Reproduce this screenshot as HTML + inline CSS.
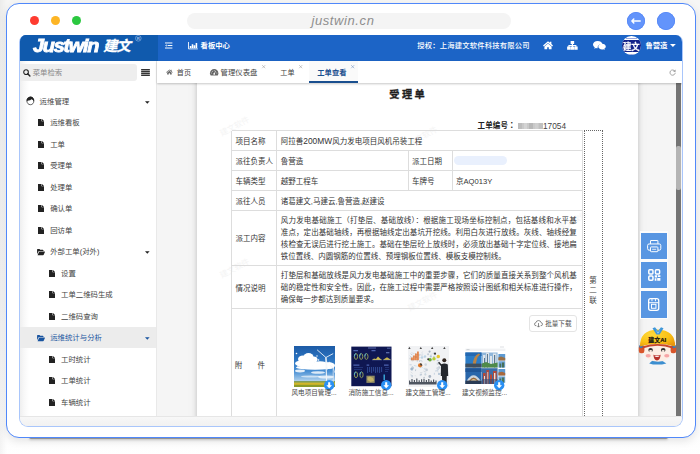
<!DOCTYPE html>
<html lang="zh-CN">
<head>
<meta charset="utf-8">
<title>justwin.cn</title>
<style>
*{box-sizing:border-box;margin:0;padding:0}
html,body{width:700px;height:454px;overflow:hidden;background:#fff}
body{position:relative;font-family:"Liberation Sans","Noto Sans CJK SC",sans-serif;color:#3a3a3a;font-size:7.4px;line-height:1}
svg{position:absolute;display:block;overflow:visible}
#bgsh{position:absolute;left:0;top:0;width:700px;height:454px;background:linear-gradient(90deg,rgba(0,0,0,.045) 0,rgba(0,0,0,0) 7px),linear-gradient(180deg,#f6f6f5 0,#f8f8f8 300px,#fdfdfd 440px,#fff 454px)}
#frame{position:absolute;left:5.6px;top:3px;width:690.6px;height:434.6px;border:1.7px solid #5088fa;border-radius:13px;background:#fff;box-shadow:0 3px 9px rgba(0,0,0,.10)}
#fsh{position:absolute;left:29px;top:436.6px;width:639px;height:2.5px;border-radius:0 0 3px 3px;background:#9c9c9c;box-shadow:0 1px 2.5px rgba(0,0,0,.22)}
.dot{position:absolute;top:16px;width:9px;height:9px;border-radius:50%}
#url{position:absolute;left:187px;top:12.6px;width:324px;height:16px;border-radius:8px;background:#f4f4f4;text-align:left;padding-left:124.4px;font-style:italic;font-size:13px;line-height:15.2px;color:#8e8e8e;letter-spacing:.6px}
.cb{position:absolute;top:11.5px;width:18px;height:18px;border-radius:50%;background:#6394fb;box-shadow:inset 0 0 0 .8px #5688f6}
#app{position:absolute;left:19px;top:34.7px;width:664px;height:392px;border:1px solid #a9c6fb;border-top:none;border-radius:7px 7px 9px 9px;overflow:hidden;background:#f1f1f1}
#hdr{position:absolute;left:0;top:0;width:664px;height:26px;background:#1c64c6;color:#fff}
#logo{position:absolute;left:0;top:0;width:138px;height:26px;background:#105aad}
#side{position:absolute;left:0;top:26px;width:137px;height:356px;background:linear-gradient(90deg,#efefef 0,#f8f8f8 4px,#fff 9px);border-right:1px solid #e9e9e9}
#tabs{position:absolute;left:137px;top:26px;width:527px;height:22.3px;background:#fff;box-shadow:0 1px 2px rgba(0,0,0,.22);z-index:3}
#content{position:absolute;left:137px;top:48px;width:527px;height:334px;background:#f5f5f5;overflow:hidden}
#paper{position:absolute;left:39.6px;top:-10px;width:441px;height:360px;background:#fff;box-shadow:0 0 5px rgba(0,0,0,.20),0 0 12px rgba(0,0,0,.05)}
#foot{position:absolute;left:0;top:381.5px;width:664px;height:11px;background:linear-gradient(180deg,#f7f7f7,#f1f1f1);border-top:1px solid #e6e6e6;z-index:4}
.t{position:absolute;white-space:nowrap;height:12px;line-height:12px}
.b{font-weight:bold}
.mi{position:absolute;left:0;width:136px;height:21.5px}
.mi .t{top:5.25px}
.hl{position:absolute;background:#ddd}
.vl{position:absolute;background:#ddd;width:1px}
.cell{position:absolute;white-space:nowrap;line-height:12px;font-size:7.5px;color:#333}
.jl{display:block;width:296px;text-align:justify;text-align-last:justify;height:12px}
.jn{display:block;height:12px}
.tbtn{position:absolute;left:484px;width:26.4px;height:26.4px;background:#5896e2}
.cap{position:absolute;font-size:6.6px;color:#4a4a4a;white-space:nowrap;line-height:10px;height:10px}
.thumb{position:absolute;top:262.9px;width:41px;height:41px;overflow:hidden}
.wm{position:absolute;color:#f4f4f4;font-size:8px;transform:rotate(-28deg);white-space:nowrap}
</style>
</head>
<body>
<div id="bgsh"></div>
<div id="fsh"></div>
<div id="frame"></div>
<div class="dot" style="left:30px;background:#fe3b30"></div>
<div class="dot" style="left:50.5px;background:#fdb525"></div>
<div class="dot" style="left:71.5px;background:#2bc840"></div>
<div id="url">justwin.cn</div>
<div class="cb" style="left:627px"><svg style="left:4px;top:6px" width="10" height="6" viewBox="0 0 10 6"><path d="M2.8 1 L0.9 3 L2.8 5 M1 3 H9.2" stroke="#fff" stroke-width="1.5" fill="none" stroke-linecap="round" stroke-linejoin="round"/></svg></div>
<div class="cb" style="left:657px"></div>
<div id="app">
<div id="hdr">
<div id="logo">
 <div class="t b" style="left:13.4px;top:0.2px;height:22px;line-height:22px;font-size:18px;font-style:italic;letter-spacing:-1.15px;-webkit-text-stroke:.8px #fff;transform:scaleX(1.105);transform-origin:0 50%">Justwin</div>
 <div class="t b" style="left:83.2px;top:0.6px;height:22px;line-height:22px;font-size:14.2px;font-style:italic;letter-spacing:-.8px;-webkit-text-stroke:.3px #fff">建文</div>
 <svg style="left:114.6px;top:0.5px" width="6.6" height="6.6" viewBox="0 0 20 20"><circle cx="10" cy="10" r="8.6" fill="none" stroke="#9dbfea" stroke-width="1.8"/><text x="10" y="14.6" text-anchor="middle" font-family="Liberation Sans, sans-serif" font-weight="bold" font-size="13" fill="#9dbfea">R</text></svg>
</div>
<svg style="left:145.4px;top:7.4px" width="7.4" height="7" viewBox="0 0 17 14"><path d="M0 1.2H17M6 7H17M0 12.8H17" stroke="#fff" stroke-width="2.2"/><path d="M3.8 4.2L0.6 7L3.8 9.8Z" fill="#fff"/></svg>
<svg style="left:167.9px;top:7.4px" width="9.8" height="7.4" viewBox="0 0 20 15"><path d="M1 0V14H20" stroke="#fff" stroke-width="1.8" fill="none"/><path d="M3.6 12V8H6.8V12Z M7.6 12V4.5H10.8V12Z M11.6 12V6.5H14.8V12Z M15.6 12V2H18.8V12Z" fill="#fff"/></svg>
<div class="t b" style="left:180.6px;top:5.2px;font-size:7.3px">看板中心</div>
<div class="t" style="left:397.3px;top:5.5px;font-size:7.3px;letter-spacing:.2px;font-weight:500">授权：上海建文软件科技有限公司</div>
<svg style="left:522.6px;top:6.6px" width="10" height="8.6" viewBox="0 0 21 17"><path d="M10.5 0L0 8.8L1.8 11L10.5 3.8L19.2 11L21 8.8L17.6 5.9V1.2H14.4V3.3Z" fill="#fff"/><path d="M10.5 4.6L3 10.8V17H8.8V12.4H12.2V17H18V10.8Z" fill="#fff"/></svg>
<svg style="left:546.6px;top:6.2px" width="10.8" height="8.8" viewBox="0 0 22 18"><path d="M7.4 0H14.6V6H12.2V8.2H19.2V11.4H21.8V18H14.8V11.4H17V10.2H12.2V11.4H14.4V18H7.6V11.4H9.8V10.2H5V11.4H7.2V18H0.2V11.4H2.8V8.2H9.8V6H7.4Z" fill="#fff"/></svg>
<svg style="left:572.8px;top:6.2px" width="12.8" height="9" viewBox="0 0 26 18"><path d="M9.5 0C4.2 0 0 3.2 0 7.2C0 9.5 1.4 11.5 3.5 12.8L2.6 15.6L6 13.9C7.1 14.2 8.3 14.4 9.5 14.4C9.4 13.9 9.3 13.4 9.3 12.9C9.3 8.9 13.1 5.7 17.8 5.7C18.2 5.7 18.6 5.7 19 5.8C18.2 2.5 14.3 0 9.5 0Z" fill="#fff"/><path d="M26 12.8C26 9.5 22.6 6.9 18.4 6.9C14.2 6.9 10.8 9.5 10.8 12.8C10.8 16.1 14.2 18.7 18.4 18.7C19.3 18.7 20.2 18.6 21 18.3L23.8 19.7L23 17.4C24.8 16.3 26 14.7 26 12.8Z" fill="#fff" transform="translate(0,-1.7)"/></svg>
<div style="position:absolute;left:601.8px;top:1.3px;width:19px;height:19.4px;border-radius:50%;background:#fff;overflow:hidden">
 <div style="position:absolute;left:0;top:3.8px;width:19px;height:12.4px;background:#14238a"></div>
 <div style="position:absolute;left:4px;top:2.4px;width:11px;height:.7px;background:#9aa6dc"></div>
 <div style="position:absolute;left:4px;top:17.6px;width:11px;height:.7px;background:#9aa6dc"></div>
 <div class="t b" style="left:1.2px;top:4.6px;font-size:8.4px;color:#fff;letter-spacing:-.1px;transform:scaleY(1.1);-webkit-text-stroke:.2px #fff">建文</div>
</div>
<div class="t b" style="left:625.4px;top:5.2px;font-size:7.35px">鲁营造</div>
<svg style="left:650px;top:9.7px" width="5.8" height="3" viewBox="0 0 58 30"><path d="M0 0H58L29 30Z" fill="#fff"/></svg>
</div>
<div id="side"><div style="position:absolute;left:0;top:3.7px;width:116.6px;height:16.6px;background:#eee;border-radius:0 3px 3px 0"></div>
<svg style="left:2.5px;top:8.6px" width="7.6" height="7.8" viewBox="0 0 15 15"><circle cx="6" cy="6" r="4.6" fill="none" stroke="#222" stroke-width="2.1"/><path d="M9.4 9.4L13.6 13.6" stroke="#222" stroke-width="2.8" stroke-linecap="round"/></svg>
<div class="t" style="left:12.7px;top:6.3px;color:#8a8a8a">菜单检索</div>
<svg style="left:121px;top:8.5px" width="9" height="6.8" viewBox="0 0 18 14"><path d="M0 1.2H18M0 5.1H18M0 9H18M0 12.9H18" stroke="#333" stroke-width="2.9"/></svg>
<div class="mi" style="top:29.75px;"><svg style="left:6.2px;top:5.5px" width="8.8" height="9.4" viewBox="0 0 18 20"><path d="M9 2.5C4.6 2.5 1.6 6 1.6 10.4C1.6 15 4.6 18.6 9 18.6C13.4 18.6 16.4 15 16.4 10.4C16.4 6 13.4 2.5 9 2.5Z" fill="#fff" stroke="#222" stroke-width="1.5"/><path d="M1.2 11.5Q0 3.5 7.2 1.4Q13.6 0.2 16.2 5.6Q17.4 8.4 16.6 11.5Q14.6 7.6 11 6.8Q9.2 9.6 5.2 9.6Q2.6 9.6 1.2 11.5Z" fill="#222"/></svg><div class="t" style="left:19.6px;color:#444">运维管理</div><svg style="left:125.1px;top:10.3px" width="4.6" height="2.9" viewBox="0 0 46 26"><path d="M0 0H46L23 26Z" fill="#222"/></svg></div>
<div class="mi" style="top:51.25px;"><svg style="left:18px;top:7.2px" width="6" height="7" viewBox="0 0 12 14"><path d="M0 0H7V4.5H12V14H0Z M8 0L12 3.8H8Z" fill="#222"/></svg><div class="t" style="left:30.2px;color:#444">运维看板</div></div>
<div class="mi" style="top:72.75px;"><svg style="left:18px;top:7.2px" width="6" height="7" viewBox="0 0 12 14"><path d="M0 0H7V4.5H12V14H0Z M8 0L12 3.8H8Z" fill="#222"/></svg><div class="t" style="left:30.2px;color:#444">工单</div></div>
<div class="mi" style="top:94.25px;"><svg style="left:18px;top:7.2px" width="6" height="7" viewBox="0 0 12 14"><path d="M0 0H7V4.5H12V14H0Z M8 0L12 3.8H8Z" fill="#222"/></svg><div class="t" style="left:30.2px;color:#444">受理单</div></div>
<div class="mi" style="top:115.75px;"><svg style="left:18px;top:7.2px" width="6" height="7" viewBox="0 0 12 14"><path d="M0 0H7V4.5H12V14H0Z M8 0L12 3.8H8Z" fill="#222"/></svg><div class="t" style="left:30.2px;color:#444">处理单</div></div>
<div class="mi" style="top:137.25px;"><svg style="left:18px;top:7.2px" width="6" height="7" viewBox="0 0 12 14"><path d="M0 0H7V4.5H12V14H0Z M8 0L12 3.8H8Z" fill="#222"/></svg><div class="t" style="left:30.2px;color:#444">确认单</div></div>
<div class="mi" style="top:158.75px;"><svg style="left:18px;top:7.2px" width="6" height="7" viewBox="0 0 12 14"><path d="M0 0H7V4.5H12V14H0Z M8 0L12 3.8H8Z" fill="#222"/></svg><div class="t" style="left:30.2px;color:#444">回访单</div></div>
<div class="mi" style="top:180.25px;"><svg style="left:17px;top:7.6px" width="8" height="6.4" viewBox="0 0 16 13"><path d="M0 1.2Q0 0 1.2 0H5L6.4 1.6H12Q13 1.6 13 2.6V4H4.2Q3.2 4 2.7 5L0 10.5Z M1 12.5L3.8 6Q4.2 5.2 5 5.2H15.6Q16.4 5.2 16 6L13.5 11.6Q13.1 12.5 12.2 12.5Z" fill="#222"/></svg><div class="t" style="left:30.2px;color:#444">外部工单(对外)</div><svg style="left:125.1px;top:10.3px" width="4.6" height="2.9" viewBox="0 0 46 26"><path d="M0 0H46L23 26Z" fill="#222"/></svg></div>
<div class="mi" style="top:201.75px;"><svg style="left:28.5px;top:7.2px" width="6" height="7" viewBox="0 0 12 14"><path d="M0 0H7V4.5H12V14H0Z M8 0L12 3.8H8Z" fill="#222"/></svg><div class="t" style="left:41px;color:#444">设置</div></div>
<div class="mi" style="top:223.25px;"><svg style="left:28.5px;top:7.2px" width="6" height="7" viewBox="0 0 12 14"><path d="M0 0H7V4.5H12V14H0Z M8 0L12 3.8H8Z" fill="#222"/></svg><div class="t" style="left:41px;color:#444">工单二维码生成</div></div>
<div class="mi" style="top:244.75px;"><svg style="left:28.5px;top:7.2px" width="6" height="7" viewBox="0 0 12 14"><path d="M0 0H7V4.5H12V14H0Z M8 0L12 3.8H8Z" fill="#222"/></svg><div class="t" style="left:41px;color:#444">二维码查询</div></div>
<div class="mi" style="top:266.25px;background:#ececec;"><svg style="left:17px;top:7.6px" width="8" height="6.4" viewBox="0 0 16 13"><path d="M0 1.2Q0 0 1.2 0H5L6.4 1.6H12Q13 1.6 13 2.6V4H4.2Q3.2 4 2.7 5L0 10.5Z M1 12.5L3.8 6Q4.2 5.2 5 5.2H15.6Q16.4 5.2 16 6L13.5 11.6Q13.1 12.5 12.2 12.5Z" fill="#1a55a0"/></svg><div class="t" style="left:30.2px;color:#1a55a0">运维统计与分析</div><svg style="left:125.1px;top:10.3px" width="4.6" height="2.9" viewBox="0 0 46 26"><path d="M0 0H46L23 26Z" fill="#1a55a0"/></svg></div>
<div class="mi" style="top:287.75px;"><svg style="left:28.5px;top:7.2px" width="6" height="7" viewBox="0 0 12 14"><path d="M0 0H7V4.5H12V14H0Z M8 0L12 3.8H8Z" fill="#222"/></svg><div class="t" style="left:41px;color:#444">工时统计</div></div>
<div class="mi" style="top:309.25px;"><svg style="left:28.5px;top:7.2px" width="6" height="7" viewBox="0 0 12 14"><path d="M0 0H7V4.5H12V14H0Z M8 0L12 3.8H8Z" fill="#222"/></svg><div class="t" style="left:41px;color:#444">工单统计</div></div>
<div class="mi" style="top:330.75px;"><svg style="left:28.5px;top:7.2px" width="6" height="7" viewBox="0 0 12 14"><path d="M0 0H7V4.5H12V14H0Z M8 0L12 3.8H8Z" fill="#222"/></svg><div class="t" style="left:41px;color:#444">车辆统计</div></div></div>
<div id="tabs">
<div style="position:absolute;left:152px;top:0;width:49.3px;height:22.3px;background:#fafafa"></div>
<svg style="left:9.2px;top:8.7px" width="6.8" height="6" viewBox="0 0 21 17"><path d="M10.5 0.5L0.3 9L1.7 10.6L10.5 3.3L19.3 10.6L20.7 9L17.3 6.1V1.6H14.6V3.9Z" fill="#6a6a6a"/><path d="M10.5 4.8L3.4 10.7V16.5H8.6V12H12.4V16.5H17.6V10.7Z" fill="#6a6a6a"/></svg>
<div class="t" style="left:19.8px;top:5.9px;font-size:7.1px;color:#444">首页</div>
<svg style="left:52.6px;top:8.6px" width="8.4" height="6.6" viewBox="0 0 26 20"><path d="M13 0C5.8 0 0 5.8 0 13C0 15.6 0.8 18 2.1 20H23.9C25.2 18 26 15.6 26 13C26 5.8 20.2 0 13 0Z" fill="#666"/><circle cx="13" cy="15" r="2.6" fill="#fff"/><path d="M13 15L17.5 5.5" stroke="#fff" stroke-width="2"/><circle cx="4.6" cy="12.5" r="1.5" fill="#fff"/><circle cx="7.2" cy="6.6" r="1.5" fill="#fff"/><circle cx="13" cy="4" r="1.5" fill="#fff"/><circle cx="21.4" cy="12.5" r="1.5" fill="#fff"/></svg>
<div class="t" style="left:63.5px;top:5.9px;color:#444">管理仪表盘</div>
<svg style="left:105.0px;top:4.7px" width="3.4" height="3.4" viewBox="0 0 10 10"><path d="M0.5 0.5L9.5 9.5M9.5 0.5L0.5 9.5" stroke="#999" stroke-width="1.6"/></svg>
<div class="t" style="left:123.3px;top:5.9px;font-size:7.1px;color:#444">工单</div>
<svg style="left:142.20000000000002px;top:4.7px" width="3.4" height="3.4" viewBox="0 0 10 10"><path d="M0.5 0.5L9.5 9.5M9.5 0.5L0.5 9.5" stroke="#999" stroke-width="1.6"/></svg>
<div class="t b" style="left:160.3px;top:5.9px;font-size:7.3px;color:#1a4f8f">工单查看</div>
<svg style="left:193.8px;top:4.7px" width="3.4" height="3.4" viewBox="0 0 10 10"><path d="M0.5 0.5L9.5 9.5M9.5 0.5L0.5 9.5" stroke="#6d8fbf" stroke-width="1.6"/></svg>
<div style="position:absolute;left:152px;top:20.6px;width:49.3px;height:2.2px;background:#1a4f8f"></div>
<svg style="left:511.6px;top:8.6px" width="7.2" height="7" viewBox="0 0 16 16"><path d="M13.2 5.2A6 6 0 1 0 14 8.6" fill="none" stroke="#8a8a8a" stroke-width="1.7"/><path d="M14.6 1.2V6.4H9.4Z" fill="#8a8a8a"/></svg>
</div>
<div id="content">
<div id="paper"></div>
<div class="wm" style="left:62px;top:40px">建文软件</div>
<div class="wm" style="left:250px;top:50px">建文软件</div>
<div class="wm" style="left:400px;top:135px">建文软件</div>
<div class="wm" style="left:62px;top:182px">建文软件</div>
<div class="wm" style="left:250px;top:215px">建文软件</div>
<div class="t b" style="left:200px;top:4.8px;width:100px;height:16px;line-height:16px;text-align:center;font-size:10.2px;letter-spacing:2.4px;text-indent:2.4px;color:#1e1e1e;-webkit-text-stroke:.3px #1e1e1e">受理单</div>
<div class="t b" style="left:320.5px;top:37.5px;font-size:7.5px;color:#222;letter-spacing:.15px">工单编号<span lang="ja" style="font-family:'Liberation Sans','Noto Sans CJK JP',sans-serif">：</span></div>
<svg style="left:361px;top:40px" width="25" height="6" viewBox="0 0 25 6"><rect width="25" height="6" fill="#c9c9c9"/><rect x="0" width="4" height="6" fill="#bdbdbd"/><rect x="6" width="3" height="6" fill="#d4d4d4"/><rect x="11" width="4" height="6" fill="#b8b8b8"/><rect x="17" width="3" height="6" fill="#cfcfcf"/><rect x="21" width="4" height="6" fill="#c0c0c0"/></svg>
<div class="t" style="left:386px;top:37.5px;font-size:8.3px;color:#444">17054</div>
<div class="hl" style="left:74.5px;top:47.6px;width:351.5px;height:1px"></div><div class="hl" style="left:74.5px;top:67.3px;width:351.5px;height:1px"></div><div class="hl" style="left:74.5px;top:87.1px;width:351.5px;height:1px"></div><div class="hl" style="left:74.5px;top:107.1px;width:351.5px;height:1px"></div><div class="hl" style="left:74.5px;top:127.0px;width:351.5px;height:1px"></div><div class="hl" style="left:74.5px;top:182.2px;width:351.5px;height:1px"></div><div class="hl" style="left:74.5px;top:225.5px;width:351.5px;height:1px"></div><div class="vl" style="left:74.0px;top:48.1px;height:300px"></div><div class="vl" style="left:118.9px;top:48.1px;height:300px"></div><div class="vl" style="left:425.4px;top:48.1px;height:300px"></div><div class="vl" style="left:250.8px;top:67.8px;height:39.8px"></div><div class="vl" style="left:294.8px;top:67.8px;height:39.8px"></div>
<div class="cell" style="left:78.5px;top:52.85px;">项目名称</div><div class="cell" style="left:123.8px;top:51.95px;">阿拉善<span style="font-size:8.4px">200MW</span>风力发电项目风机吊装工程</div><div class="cell" style="left:78.5px;top:73.60px;">派往负责人</div><div class="cell" style="left:123.8px;top:73.60px;">鲁营造</div><div class="cell" style="left:255px;top:73.60px;">派工日期</div><div class="cell" style="left:78.5px;top:93.50px;">车辆类型</div><div class="cell" style="left:123.8px;top:93.50px;">越野工程车</div><div class="cell" style="left:255px;top:93.50px;">车牌号</div><div class="cell" style="left:299px;top:93.50px;">京<span style="font-size:7.6px">AQ013Y</span></div><div class="cell" style="left:78.5px;top:113.45px;">派往人员</div><div class="cell" style="left:123.8px;top:113.45px;">诸葛建文,马建云,鲁营造,赵建设</div><div class="cell" style="left:78.5px;top:150.60px;">派工内容</div><div class="cell" style="left:78.5px;top:200.05px;">情况说明</div><div style="position:absolute;left:297px;top:73.2px;width:53px;height:9.2px;border-radius:5px;background:#e9f0fd"></div><div class="cell" style="left:123.8px;top:132.3px"><span class="jl">风力发电基础施工（打垫层、基础放线）：根据施工现场坐标控制点，包括基线和水平基</span><span class="jl">准点，定出基础轴线，再根据轴线定出基坑开挖线。利用白灰进行放线。灰线、轴线经复</span><span class="jl">核检查无误后进行挖土施工。基础在垫层砼上放线时，必须放出基础十字定位线、接地扁</span><span class="jn">铁位置线、内圆钢筋的位置线、预埋钢板位置线、模板支模控制线。</span></div><div class="cell" style="left:123.8px;top:187.3px"><span class="jl">打垫层和基础放线是风力发电基础施工中的重要步骤，它们的质量直接关系到整个风机基</span><span class="jl">础的稳定性和安全性。因此，在施工过程中需要严格按照设计图纸和相关标准进行操作，</span><span class="jn">确保每一步都达到质量要求。</span></div><div class="cell" style="left:77.8px;top:277.00px;">附</div><div class="cell" style="left:100.6px;top:277.00px;">件</div>
<div style="position:absolute;left:426.5px;top:47.6px;width:19.6px;height:300px;border:1px dotted #666"></div>
<div class="cell" style="left:432.2px;top:193.1px;line-height:10.05px;width:7.5px;white-space:normal;color:#444">第二联</div>
<div style="position:absolute;left:372px;top:232.8px;width:47.6px;height:16.5px;border:1px solid #e4e4e4;border-radius:3px;background:#fff"></div>
<svg style="left:377.4px;top:237.2px" width="9" height="7.6" viewBox="0 0 18 15"><path d="M4.5 11.5Q1 11.5 1 8.2Q1 5.6 3.8 5.2Q4.6 1 9 1Q13.4 1 14.2 5.2Q17 5.6 17 8.2Q17 11.5 13.5 11.5" fill="none" stroke="#666" stroke-width="1.5"/><path d="M9 6V14M6.2 11.4L9 14.2L11.8 11.4" fill="none" stroke="#666" stroke-width="1.5"/></svg>
<div class="t" style="left:388.2px;top:235px;font-size:6.6px;color:#505050">批量下载</div>
<div class="thumb" style="left:137.4px"><svg width="41" height="41" viewBox="0 0 41 41">
<defs><linearGradient id="sky" x1="0" y1="0" x2="0" y2="1"><stop offset="0" stop-color="#1d5ba6"/><stop offset=".3" stop-color="#2a72bf"/><stop offset=".62" stop-color="#4a90d4"/><stop offset=".84" stop-color="#a9cdec"/><stop offset=".88" stop-color="#d5e4ee"/></linearGradient><filter id="bl"><feGaussianBlur stdDeviation=".7"/></filter></defs>
<rect width="41" height="41" fill="url(#sky)"/>
<g filter="url(#bl)" fill="#fff"><ellipse cx="9" cy="13" rx="5" ry="3.6"/><ellipse cx="14.5" cy="11" rx="5" ry="4"/><ellipse cx="19.5" cy="13.5" rx="4" ry="3"/><ellipse cx="11" cy="17.5" rx="10" ry="3.4"/><ellipse cx="26" cy="18.5" rx="8" ry="3.2"/><ellipse cx="35" cy="19.5" rx="6" ry="3.2"/><ellipse cx="21" cy="21.5" rx="19" ry="2.2"/><ellipse cx="6" cy="25" rx="5" ry="1.4" opacity=".85"/><ellipse cx="24" cy="26.5" rx="7" ry="1.3" opacity=".8"/><ellipse cx="17" cy="30.5" rx="10" ry="1.1" opacity=".6"/><ellipse cx="32" cy="31" rx="8" ry="1.6" opacity=".75"/><circle cx="2.5" cy="7.5" r=".8"/><circle cx="23" cy="10" r=".7"/><circle cx="24.5" cy="14" r=".8"/></g>
<rect y="35.2" width="41" height="1.6" fill="#6f8f3a"/><rect y="36.6" width="41" height="2.6" fill="#d2b62a"/><rect y="38.8" width="41" height="2.2" fill="#8c9a2a"/>
<path d="M31.9 11.5L32.6 35.5" stroke="#eef3f8" stroke-width="1.1"/><path d="M31.9 11.5L23.1 3.8M31.9 11.5L39.2 7.6M31.9 11.5L33.4 23.5" stroke="#f4f8fb" stroke-width=".85"/>
<path d="M39.2 22V36M39.2 22L35.5 19M39.2 22L41 27" stroke="#e8eef5" stroke-width=".7"/>
<text x="20" y="19.6" text-anchor="middle" font-family="Liberation Sans, Noto Sans CJK SC, sans-serif" font-weight="bold" font-size="4.2" fill="#fff" opacity=".9">风电项目管理系统</text>
</svg></div><div class="thumb" style="left:194.4px"><svg width="41" height="41" viewBox="0 0 41 41">
<rect width="41" height="41" fill="#fff"/><rect x="0.3" y="0.6" width="40.2" height="39.6" fill="#0f1752"/>
<ellipse cx="5" cy="10.5" rx="1.6" ry="2.9" fill="none" stroke="#9aa85a" stroke-width=".9"/><path d="M3.4 10.5A1.6 2.9 0 0 1 5 7.6" fill="none" stroke="#4fb6d8" stroke-width=".9"/><ellipse cx="10.2" cy="10.5" rx="1.6" ry="2.9" fill="none" stroke="#9aa85a" stroke-width=".9"/><path d="M8.6 10.5A1.6 2.9 0 0 1 10.2 7.6" fill="none" stroke="#4fb6d8" stroke-width=".9"/><ellipse cx="15.4" cy="10.5" rx="1.6" ry="2.9" fill="none" stroke="#9aa85a" stroke-width=".9"/><path d="M13.8 10.5A1.6 2.9 0 0 1 15.4 7.6" fill="none" stroke="#4fb6d8" stroke-width=".9"/><ellipse cx="5" cy="28.8" rx="1.6" ry="2.9" fill="none" stroke="#9aa85a" stroke-width=".9"/><path d="M3.4 28.8A1.6 2.9 0 0 1 5 25.900000000000002" fill="none" stroke="#4fb6d8" stroke-width=".9"/><ellipse cx="10.5" cy="28.8" rx="1.6" ry="2.9" fill="none" stroke="#9aa85a" stroke-width=".9"/><path d="M8.9 28.8A1.6 2.9 0 0 1 10.5 25.900000000000002" fill="none" stroke="#4fb6d8" stroke-width=".9"/>
<path d="M21 14L23 12.4L25 13L27 10.6L29 12.6L31 14Z" fill="#d0bd4c"/><path d="M32 14L34 12.6L36 11.2L38 12.6L40 14Z" fill="#c9b64a"/>
<path d="M21 14H31M32 14H40" stroke="#6f86c8" stroke-width=".4"/>
<rect x="2.4" y="4.2" width="4.6" height="1" fill="#5d77c8"/><rect x="20.5" y="4.2" width="4" height="1" fill="#5d77c8"/><rect x="35" y="6.4" width="3.4" height=".8" fill="#8aa0e0"/><rect x="17" y="1.6" width="8" height=".8" fill="#6f86c8"/><rect x="36" y="1.8" width="3.6" height=".7" fill="#6f86c8"/>
<rect x="2.4" y="18.6" width="6" height="1" fill="#5d77c8"/><rect x="15.6" y="18.6" width="2.6" height="1" fill="#5d77c8"/><rect x="33" y="18.6" width="4.6" height="1" fill="#5d77c8"/>
<path d="M16.6 21V27M18.6 21V26M20.6 21V27M22.6 21V25.5M24.6 21V27M26.6 21V26.5M28.6 21V27M30.6 21V26" stroke="#3e5fae" stroke-width=".7"/>
<path d="M3 21.5H12M3 23.5H11M34 21.5H38M34 23.5H38M34 25.5H37" stroke="#2f4690" stroke-width=".6"/>
<rect x="15.4" y="29.7" width="8.3" height="7.2" fill="#8f8a62"/><path d="M16.5 31.5L19 30.5L22 32L23 35L19.5 36L16.5 34Z" fill="#c2b26a"/>
<path d="M33.2 28.6V34" stroke="#3fb7e8" stroke-width="1.3"/>
</svg></div><div class="thumb" style="left:250.7px"><svg width="41" height="41" viewBox="0 0 41 41">
<rect width="41" height="41" fill="#f1f2f4"/>
<path d="M0.2 3L1.4 0.8L2.6 3ZM11.6 3L12.8 0.8L14 3ZM23 3L24.2 0.8L25.4 3ZM35.2 3L36.4 0.8L37.6 3Z" fill="#4a4a4a"/>
<circle cx="11.2" cy="9.1" r="1.3" fill="#cfd6dd"/><circle cx="4.3" cy="20.7" r="0.6" fill="#bcd3e4"/><circle cx="14.0" cy="11.5" r="1.3" fill="#bcd3e4"/><path d="M5.2 11.0l-2.6 0.3" stroke="#cfd6dd" stroke-width=".7" fill="none"/><path d="M3.0 11.0l-1.3 -1.4" stroke="#bcd3e4" stroke-width=".7" fill="none"/><path d="M5.0 13.3l-2.4 0.3" stroke="#9fb6cc" stroke-width=".7" fill="none"/><circle cx="7.1" cy="7.6" r="0.6" fill="#cfd6dd"/><path d="M7.7 23.4l-0.2 1.7" stroke="#a9b4c2" stroke-width=".7" fill="none"/><path d="M12.3 11.7l-1.5 0.3" stroke="#b4c6d8" stroke-width=".7" fill="none"/><circle cx="17.3" cy="28.6" r="1.1" fill="#cfd6dd"/><path d="M3.7 18.8l-2.1 -0.0" stroke="#b4c6d8" stroke-width=".7" fill="none"/><path d="M2.7 23.0l1.7 1.3" stroke="#9fb6cc" stroke-width=".7" fill="none"/><path d="M11.7 14.5l-0.3 1.4" stroke="#a9b4c2" stroke-width=".7" fill="none"/><circle cx="29.8" cy="17.8" r="1.2" fill="#cfd6dd"/><path d="M10.8 20.6l-1.3 -0.5" stroke="#cfd6dd" stroke-width=".7" fill="none"/><circle cx="21.6" cy="5.6" r="1.1" fill="#a9b4c2"/><circle cx="16.3" cy="10.9" r="0.7" fill="#d3d8de"/><circle cx="13.2" cy="28.5" r="0.9" fill="#c3ccd6"/><path d="M9.8 8.7l-1.3 -0.3" stroke="#a9b4c2" stroke-width=".7" fill="none"/><circle cx="12.3" cy="28.9" r="0.7" fill="#b4c6d8"/><path d="M8.5 11.3l-1.9 -0.9" stroke="#a9b4c2" stroke-width=".7" fill="none"/><path d="M5.9 19.4l2.7 0.8" stroke="#bcd3e4" stroke-width=".7" fill="none"/><path d="M17.0 21.7l-0.3 1.5" stroke="#cfd6dd" stroke-width=".7" fill="none"/><circle cx="30.1" cy="23.4" r="0.9" fill="#bcd3e4"/><circle cx="4.6" cy="22.1" r="1.5" fill="#c3ccd6"/><circle cx="14.7" cy="8.0" r="0.5" fill="#bcd3e4"/><path d="M6.0 7.7l-2.6 -1.2" stroke="#d3d8de" stroke-width=".7" fill="none"/><path d="M12.8 22.1l-0.2 -1.5" stroke="#d3d8de" stroke-width=".7" fill="none"/><circle cx="16.1" cy="31.4" r="0.6" fill="#a9b4c2"/><circle cx="4.6" cy="14.3" r="1.2" fill="#d3d8de"/><circle cx="17.0" cy="10.5" r="1.2" fill="#bcd3e4"/><path d="M28.9 25.5l2.2 0.8" stroke="#d3d8de" stroke-width=".7" fill="none"/><circle cx="9.3" cy="14.9" r="0.7" fill="#b4c6d8"/><circle cx="17.7" cy="18.6" r="1.3" fill="#cfd6dd"/><circle cx="31.0" cy="28.0" r="0.9" fill="#9fb6cc"/><circle cx="25.6" cy="10.4" r="0.5" fill="#a9b4c2"/><circle cx="2.3" cy="12.5" r="1.1" fill="#d3d8de"/><path d="M11.8 26.8l2.7 -0.5" stroke="#cfd6dd" stroke-width=".7" fill="none"/><circle cx="8.1" cy="11.1" r="1.0" fill="#b4c6d8"/><circle cx="31.1" cy="21.5" r="1.2" fill="#c3ccd6"/><circle cx="25.5" cy="7.3" r="0.9" fill="#cfd6dd"/><circle cx="22.8" cy="10.4" r="1.1" fill="#b4c6d8"/><circle cx="4.1" cy="30.5" r="0.9" fill="#cfd6dd"/><path d="M29.9 24.6l-2.8 0.4" stroke="#b4c6d8" stroke-width=".7" fill="none"/><path d="M15.5 22.7l2.9 0.6" stroke="#bcd3e4" stroke-width=".7" fill="none"/><circle cx="12.0" cy="19.8" r="1.3" fill="#b4c6d8"/><path d="M23.3 7.8l-0.4 1.5" stroke="#cfd6dd" stroke-width=".7" fill="none"/><circle cx="26.3" cy="10.7" r="1.0" fill="#d3d8de"/><circle cx="24.4" cy="13.8" r="0.6" fill="#bcd3e4"/><path d="M28.8 14.6l1.9 0.1" stroke="#a9b4c2" stroke-width=".7" fill="none"/><path d="M26.3 28.7l0.1 -1.9" stroke="#b4c6d8" stroke-width=".7" fill="none"/><path d="M14.7 9.9l-2.1 -1.4" stroke="#c3ccd6" stroke-width=".7" fill="none"/><circle cx="20.1" cy="8.2" r="1.0" fill="#c3ccd6"/><path d="M18.2 26.2l-2.7 -1.2" stroke="#c3ccd6" stroke-width=".7" fill="none"/><path d="M2.8 7.6l1.6 1.6" stroke="#a9b4c2" stroke-width=".7" fill="none"/><path d="M14.8 21.5l-1.8 -0.9" stroke="#bcd3e4" stroke-width=".7" fill="none"/><path d="M16.7 26.8l1.2 1.5" stroke="#bcd3e4" stroke-width=".7" fill="none"/><path d="M29.8 12.0l-1.8 -0.2" stroke="#bcd3e4" stroke-width=".7" fill="none"/><circle cx="14.0" cy="15.6" r="0.7" fill="#d3d8de"/><circle cx="3.7" cy="23.1" r="1.3" fill="#9fb6cc"/><circle cx="29.7" cy="22.4" r="1.4" fill="#d3d8de"/><circle cx="30.5" cy="10.9" r="1.0" fill="#c3ccd6"/><path d="M31.2 27.5l3.0 -0.4" stroke="#b4c6d8" stroke-width=".7" fill="none"/><path d="M14.1 14.6l-2.9 0.2" stroke="#c3ccd6" stroke-width=".7" fill="none"/><path d="M14.7 5.5l-1.2 1.8" stroke="#d3d8de" stroke-width=".7" fill="none"/><path d="M4.9 29.8l-2.4 -0.9" stroke="#b4c6d8" stroke-width=".7" fill="none"/><path d="M2.7 26.0l1.9 1.4" stroke="#d3d8de" stroke-width=".7" fill="none"/><circle cx="21.8" cy="30.5" r="1.4" fill="#a9b4c2"/><circle cx="18.6" cy="23.9" r="1.3" fill="#c3ccd6"/><path d="M7.0 29.2l0.8 1.2" stroke="#d3d8de" stroke-width=".7" fill="none"/>
<path d="M3.2 14.3V11.6H4.7V14.3ZM5.2 14.3V9.6H6.7V14.3ZM7.2 14.3V7.4H8.7V14.3ZM9.2 14.3V5.5H10.7V14.3Z" fill="#e2702a"/>
<circle cx="12.1" cy="19.3" r="2.1" fill="#e07a2a"/><path d="M12.1 19.3L12.1 17.2A2.1 2.1 0 0 1 14.1 19.8Z" fill="#444"/>
<circle cx="22" cy="13.8" r="1.8" fill="#6fae3a"/><circle cx="26" cy="12.7" r="1.7" fill="#b6cf3a"/><circle cx="30.3" cy="10.5" r="1.7" fill="#e9c72c"/><circle cx="27" cy="7.7" r="1.1" fill="#3a3a3a"/><circle cx="20.2" cy="13.2" r="1" fill="#333"/>
<path d="M1 38.5V34.5H2.2V36H3.4V33H4.6V36H5.8V34H7V36H8.2V32.6H9.4V36H10.6V34.2H11.8V36H13V33.2H14.2V36H15.4V32.8H16.6V36H17.8V34H19V36H20.2V33H21.4V36H22.6V34.4H23.8V36H25V33.4H26.2V36H27.4V34.6H28.6V38.5Z" fill="#4e5560"/>
<circle cx="36.3" cy="14.3" r="2" fill="#33261f"/><path d="M33 18.6Q36.4 16.4 39.8 18.6L40.2 30H38.8L38.6 40H34.2L34 30H32.8Z" fill="#24272d"/><path d="M33.4 19.4L30.6 16.2" stroke="#24272d" stroke-width="1.5"/>
</svg></div><div class="thumb" style="left:307.6px"><svg width="41" height="41" viewBox="0 0 41 41">
<rect width="41" height="41" fill="#fff"/><rect x="0.4" y="2.6" width="40" height="2.4" fill="#f1f2f4"/><rect x="1.5" y="3.2" width="3" height=".9" fill="#c8ccd2"/><rect x="35" y="0.6" width="4" height=".8" fill="#d5d8dc"/>
<rect x="0.4" y="6.5" width="16.2" height="15" fill="#2c7cc6"/><path d="M0.4 6.5H16.6V10H0.4Z" fill="#2468b0"/><path d="M7.5 21.5Q7.6 10 13.8 7.6L15.2 8.6Q10.6 12 10.8 21.5Z" fill="#b98446"/><rect x="0.4" y="17.6" width="16.2" height="3.9" fill="#3e4f60"/>
<rect x="17" y="6.5" width="15.6" height="15" fill="#8fb6da"/><path d="M18 21.5V9H20.4V21.5ZM21.2 21.5V6.8H24V21.5ZM25 21.5V10H27V21.5ZM28 21.5V7.6H31.4V21.5Z" fill="#dfe5ea"/><path d="M19 21.5V12H20V21.5ZM22 21.5V8H23V21.5ZM29 21.5V9H30.2V21.5Z" fill="#5c7890"/><path d="M17 17.5L21 16L26 18L32.6 16.5V21.5H17Z" fill="#4f8a4a"/>
<rect x="0.4" y="22.2" width="16.2" height="15.8" fill="#2966aa"/><path d="M0.4 22.2H16.6V26H0.4Z" fill="#1f5596"/><path d="M1.6 35Q8.4 23.4 15.8 35Z" fill="#c9d4de"/><path d="M4 35Q8.5 28 13.4 35Z" fill="#9a6a3c"/><path d="M5.6 35Q8.6 31 11.8 35Z" fill="#e0c89a"/><rect x="0.4" y="34.6" width="16.2" height="3.4" fill="#2b3c55"/>
<rect x="17" y="22.2" width="15.6" height="15.8" fill="#3b6ea8"/><path d="M18 38V27H20.6V38ZM21.4 38V24H24V38ZM25 38V28.4H27V38ZM28 38V25H31.6V38Z" fill="#b24a3a"/><path d="M19 38V30H20V38ZM22.4 38V26H23.2V38ZM29 38V27H30.4V38Z" fill="#e8e2dc"/><path d="M17 33H32.6V38H17Z" fill="#2e4a74" opacity=".55"/>
<rect x="33.4" y="8" width="6.8" height="6.4" fill="#5d9ad2"/><path d="M33.4 14.4V11.6L36 10.6L40.2 12V14.4Z" fill="#9a6f45"/>
<rect x="33.4" y="15.2" width="6.8" height="6.4" fill="#6ea5d8"/><path d="M34.4 21.6V17.4H36.2V21.6ZM37 21.6V16.4H39.2V21.6Z" fill="#47705a"/>
<rect x="33.4" y="23" width="6.8" height="6.4" fill="#5b98d0"/><path d="M33.4 29.4V26.6L37 25.8L40.2 27V29.4Z" fill="#a8683c"/>
<rect x="33.4" y="30.4" width="6.8" height="6.4" fill="#70a6d8"/><path d="M34.4 36.8V32.6H36.2V36.8ZM37 36.8V31.6H39.2V36.8Z" fill="#4a7458"/>
</svg></div>
<svg style="left:166.9px;top:297.4px" width="10.4" height="10.4" viewBox="0 0 20 20"><circle cx="10" cy="10" r="10" fill="#2a90f4"/><path d="M8 4.5H12V10H15.5L10 16L4.5 10H8Z" fill="#fff"/></svg><svg style="left:223.9px;top:297.4px" width="10.4" height="10.4" viewBox="0 0 20 20"><circle cx="10" cy="10" r="10" fill="#2a90f4"/><path d="M8 4.5H12V10H15.5L10 16L4.5 10H8Z" fill="#fff"/></svg><svg style="left:280.2px;top:297.4px" width="10.4" height="10.4" viewBox="0 0 20 20"><circle cx="10" cy="10" r="10" fill="#2a90f4"/><path d="M8 4.5H12V10H15.5L10 16L4.5 10H8Z" fill="#fff"/></svg><svg style="left:337.1px;top:297.4px" width="10.4" height="10.4" viewBox="0 0 20 20"><circle cx="10" cy="10" r="10" fill="#2a90f4"/><path d="M8 4.5H12V10H15.5L10 16L4.5 10H8Z" fill="#fff"/></svg>
<div class="cap" style="left:134.5px;top:305.3px">风电项目管理...</div><div class="cap" style="left:191.5px;top:305.3px">消防施工信息...</div><div class="cap" style="left:248.6px;top:305.3px">建文施工管理...</div><div class="cap" style="left:305px;top:305.3px">建文视频监控...</div>
<div style="position:absolute;left:483px;top:148.6px;width:28.4px;height:88px;background:#fcfcfc"></div>
<div class="tbtn" style="top:150.3px"><svg style="left:6px;top:7px" width="14.4" height="12.4" viewBox="0 0 29 25"><path d="M7 8V1.5Q7 1 7.5 1H21.5Q22 1 22 1.5V8" fill="none" stroke="#fff" stroke-width="2"/><rect x="1.2" y="8" width="26.6" height="12.5" rx="3" fill="none" stroke="#fff" stroke-width="2"/><rect x="7" y="14" width="15" height="9.6" rx="1.5" fill="#5896e2" stroke="#fff" stroke-width="2"/><path d="M10.5 18.8H18.5" stroke="#fff" stroke-width="1.6"/></svg></div>
<div class="tbtn" style="top:179.1px"><svg style="left:7.2px;top:7.4px" width="12.4" height="12" viewBox="0 0 25 24"><rect x="1.6" y="1.6" width="8.4" height="8.4" rx="1.8" fill="none" stroke="#fff" stroke-width="3"/><rect x="15" y="1.6" width="8.4" height="8.4" rx="1.8" fill="none" stroke="#fff" stroke-width="3"/><rect x="1.6" y="14" width="8.4" height="8.4" rx="1.8" fill="none" stroke="#fff" stroke-width="3"/><path d="M13.6 12.6H18.4V17H13.6ZM20 12.6H25V16H20ZM13.6 18.6H17V23.8H13.6ZM18.6 18H25V23.8H18.6Z" fill="#fff"/></svg></div>
<div class="tbtn" style="top:208.5px"><svg style="left:7.4px;top:6.4px" width="11.4" height="13" viewBox="0 0 23 26"><rect x="1.3" y="1.3" width="20.4" height="23.4" rx="4" fill="none" stroke="#fff" stroke-width="2.6"/><path d="M2 9.4H21M8 2V6.4M15 2V6.4" fill="none" stroke="#fff" stroke-width="2"/><rect x="7" y="12.6" width="9" height="8" fill="none" stroke="#fff" stroke-width="2"/></svg></div>
<div style="position:absolute;left:518.8px;top:0;width:5.2px;height:334px;background:#747474"></div>
<div style="position:absolute;left:518.8px;top:63px;width:5.2px;height:44px;background:#b4b4b4;border-radius:2px"></div>
<div style="position:absolute;left:524px;top:0;width:3px;height:334px;background:#f6f6f6"></div>
<svg style="left:481px;top:242.3px" width="40" height="42" viewBox="638 325 40 42">
<defs><radialGradient id="hg" cx=".35" cy=".3" r=".8"><stop offset="0" stop-color="#ffd93a"/><stop offset=".6" stop-color="#f9c114"/><stop offset="1" stop-color="#e9960e"/></radialGradient></defs>
<path d="M649.2 363.6L653 360H661L666.3 363.6L662 364.6H653Z" fill="#3d8fd0"/>
<ellipse cx="658" cy="352.5" rx="13.8" ry="9.2" fill="#fdeee4"/>
<rect x="638.8" y="345.6" width="5.6" height="7.6" rx="2.2" fill="#d8552a"/><rect x="670.6" y="345.6" width="5.6" height="7.6" rx="2.2" fill="#d8552a"/>
<rect x="639.3" y="344.8" width="4.2" height="3.2" rx="1.2" fill="#3a7ab8"/><rect x="671.6" y="344.8" width="4.2" height="3.2" rx="1.2" fill="#3a7ab8"/>
<path d="M640 346.6Q639.6 330 657.5 329.4Q675.4 330 675.2 346.6Q666 343.8 657.6 343.8Q649 343.8 640 346.6Z" fill="url(#hg)"/>
<path d="M642.5 348.6Q657.6 343 672.6 348.6L672.8 346.4Q657.6 341.8 642.3 346.4Z" fill="#c8452a"/>
<path d="M652.5 328.2L655 327.2L658 331L661 327.2L663.5 328.2L659.6 334.4H656.4Z" fill="#3f97d8"/>
<path d="M655.6 329.6L658 332.6L660.4 329.6L658 333.8Z" fill="#bfe2f7"/>
<ellipse cx="650.6" cy="350" rx="2.3" ry="2" fill="#333"/><ellipse cx="663.2" cy="350" rx="2.3" ry="2" fill="#333"/>
<ellipse cx="650.6" cy="351" rx="1.5" ry="1.1" fill="#fdeee4"/><ellipse cx="663.2" cy="351" rx="1.5" ry="1.1" fill="#fdeee4"/>
<ellipse cx="648.2" cy="355.8" rx="2.6" ry="1.7" fill="#f7a6a6"/><ellipse cx="666.8" cy="355.8" rx="2.6" ry="1.7" fill="#f7a6a6"/>
<path d="M653.4 354.8Q657 356.2 660.6 354.8Q660.2 360.4 657 360.4Q653.8 360.4 653.4 354.8Z" fill="#b8302a"/>
<path d="M654.6 355.4Q657 356.4 659.4 355.4L659.2 356.6Q657 357.2 654.8 356.6Z" fill="#fff"/>
<text x="657.2" y="342.2" text-anchor="middle" font-family="Liberation Sans, Noto Sans CJK SC, sans-serif" font-weight="bold" font-size="5.9" fill="#111" stroke="#111" stroke-width=".2">建文AI</text>
</svg>
</div>
<div id="foot"></div>
</div>
</body>
</html>
